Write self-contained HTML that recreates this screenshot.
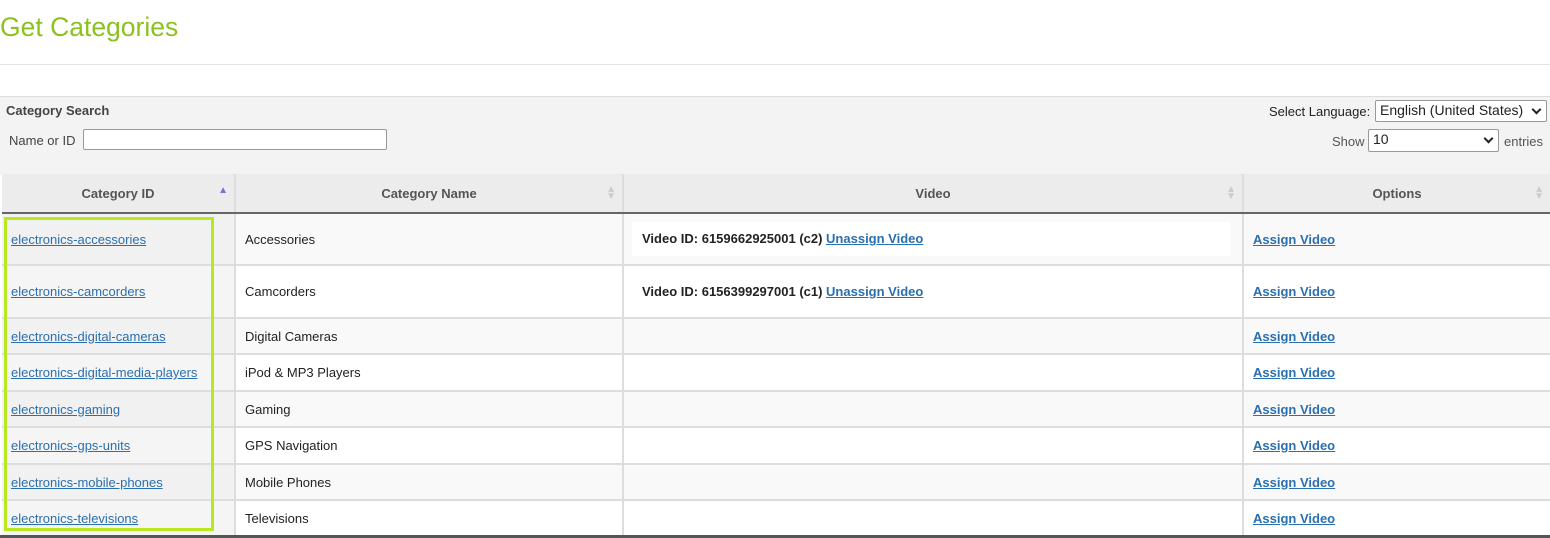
<!DOCTYPE html>
<html><head><style>
body{margin:0;width:1550px;height:538px;background:#fff;font-family:"Liberation Sans",Arial,sans-serif;position:relative;overflow:hidden;color:#222}
.a{position:absolute;white-space:nowrap}
h1{position:absolute;left:0;top:12px;margin:0;font-weight:normal;font-size:26.5px;color:#8cc21f}
.sel{position:absolute;border:1px solid #999;background:#fff;font-size:14px;box-sizing:border-box;padding:1px 4px;border-radius:2px}
.sel:after{content:"";position:absolute;right:6px;top:5px;width:5px;height:5px;border-right:2px solid #222;border-bottom:2px solid #222;transform:rotate(45deg)}
table{position:absolute;left:2px;top:174px;width:1548px;border-collapse:collapse;font-size:13px}
th{background:#ececec;color:#555;font-size:13px;height:38px;border-left:2px solid #ddd;border-bottom:2px solid #666;position:relative;padding:0}
th:first-child{border-left:none}
th i{position:absolute;right:6px;top:12px;font-style:normal;font-size:10px;color:#ccc;line-height:7px}
td{border-left:2px solid #ddd;border-top:2px solid #ddd;padding:0 0 0 9px;background:#fff}
td:first-child{border-left:none;background:#f5f5f5}
tr.o td{background:#f9f9f9}
tr.o td:first-child{background:#f1f1f1}
a{color:#2a6fb0;text-decoration:underline}
b a{font-weight:bold}
</style></head><body>
<h1>Get Categories</h1>
<div class="a" style="left:0;top:64px;width:1550px;height:1px;background:#e3e3e3"></div>
<div class="a" style="left:0;top:96px;width:1550px;height:78px;background:#f3f3f3;border-top:1px solid #ddd"></div>
<div class="a" style="left:6px;top:103px;font-size:13px;font-weight:bold;color:#444">Category Search</div>
<div class="a" style="left:9px;top:133px;font-size:13px;color:#444">Name or ID</div>
<div class="a" style="left:83px;top:129px;width:304px;height:21px;border:1px solid #999;background:#fff;box-sizing:border-box;border-radius:2px"></div>
<div class="a" style="left:1269px;top:104px;font-size:13px;color:#222">Select Language:</div>
<div class="sel" style="left:1375px;top:100px;width:172px;height:22px">English (United States)</div>
<div class="a" style="left:1332px;top:134px;font-size:13px;color:#555">Show</div>
<div class="sel" style="left:1368px;top:129px;width:131px;height:23px">10</div>
<div class="a" style="left:1504px;top:134px;font-size:13px;color:#555">entries</div>
<table>
<tr><th style="width:232px">Category ID<i style="color:#7b72d9;top:13px">▲</i></th><th style="width:386px">Category Name<i>▲<br>▼</i></th><th style="width:618px">Video<i>▲<br>▼</i></th><th>Options<i>▲<br>▼</i></th></tr>
<tr class="o" style="height:52px"><td><a>electronics-accessories</a></td><td>Accessories</td><td><div style="background:#fff;width:588px;height:34px;line-height:34px;padding-left:10px;margin-left:-1px"><b>Video ID: 6159662925001 (c2) <a>Unassign Video</a></b></div></td><td><b><a>Assign Video</a></b></td></tr>
<tr style="height:53px"><td><a>electronics-camcorders</a></td><td>Camcorders</td><td style="padding-left:18px"><b>Video ID: 6156399297001 (c1) <a>Unassign Video</a></b></td><td><b><a>Assign Video</a></b></td></tr>
<tr class="o" style="height:36px"><td><a>electronics-digital-cameras</a></td><td>Digital Cameras</td><td></td><td><b><a>Assign Video</a></b></td></tr>
<tr style="height:37px"><td><a>electronics-digital-media-players</a></td><td>iPod &amp; MP3 Players</td><td></td><td><b><a>Assign Video</a></b></td></tr>
<tr class="o" style="height:36px"><td><a>electronics-gaming</a></td><td>Gaming</td><td></td><td><b><a>Assign Video</a></b></td></tr>
<tr style="height:37px"><td><a>electronics-gps-units</a></td><td>GPS Navigation</td><td></td><td><b><a>Assign Video</a></b></td></tr>
<tr class="o" style="height:36px"><td><a>electronics-mobile-phones</a></td><td>Mobile Phones</td><td></td><td><b><a>Assign Video</a></b></td></tr>
<tr style="height:36px"><td><a>electronics-televisions</a></td><td>Televisions</td><td></td><td><b><a>Assign Video</a></b></td></tr>
</table>
<div class="a" style="left:0;top:535px;width:1550px;height:3px;background:#555"></div>
<div class="a" style="left:4px;top:217px;width:204px;height:308px;border:3px solid #b8e81f"></div>
</body></html>
